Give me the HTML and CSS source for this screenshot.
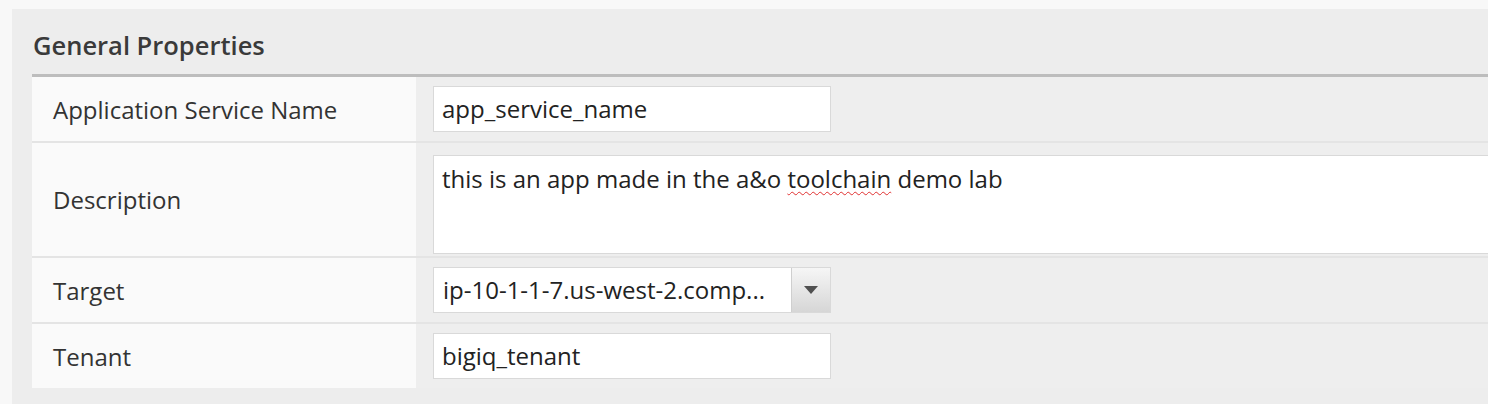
FILE: index.html
```html
<!DOCTYPE html>
<html>
<head>
<meta charset="utf-8">
<link rel="stylesheet" href="styles.css">
</head>
<body>
<div class="panel">
  <h2 class="heading">General Properties</h2>
  <div class="form">
    <div class="row">
      <div class="label">Application Service Name</div>
      <div class="field"><div class="input">app_service_name</div></div>
    </div>
    <div class="row row-tall">
      <div class="label">Description</div>
      <div class="field"><div class="textarea">this is an app made in the a&amp;o <span class="spell">toolchain</span> demo lab</div></div>
    </div>
    <div class="row">
      <div class="label">Target</div>
      <div class="field">
        <div class="select">
          <span class="select-text">ip-10-1-1-7.us-west-2.comp...</span>
          <span class="select-btn"><svg width="14" height="8" viewBox="0 0 14 8"><path d="M0 0H14L7 8Z" fill="#505050"/></svg></span>
        </div>
      </div>
    </div>
    <div class="row">
      <div class="label">Tenant</div>
      <div class="field"><div class="input">bigiq_tenant</div></div>
    </div>
  </div>
</div>
</body>
</html>
```

FILE: styles.css
```css
html, body {
  margin: 0;
  padding: 0;
}
body {
  background: #f8f8f8;
  font-family: "Open Sans", "Noto Sans", sans-serif;
  color: #333;
  width: 1488px;
  height: 404px;
  overflow: hidden;
}
.panel {
  margin: 9px 0 0 12px;
  background: #ededed;
  padding: 0 0 17px 20px;
  height: 395px;
  box-sizing: border-box;
}
.heading {
  margin: 0;
  font-size: 25.5px;
  font-weight: 600;
  color: #3a3a3a;
  padding: 19px 0 0 1px;
  height: 46px;
  line-height: 34px;
  box-sizing: border-box;
  height: 68px;
  border-bottom: 3px solid #bdbdbd;
}
.form {
  display: flex;
  flex-direction: column;
  gap: 2px;
  background: #e4e4e4;
}
.row {
  display: flex;
  height: 64px;
}
.row-tall {
  height: 113px;
}
.label {
  width: 384px;
  flex: none;
  background: #fafafa;
  display: flex;
  align-items: center;
  padding-left: 21px;
  box-sizing: border-box;
  font-size: 24px;
  color: #333;
}
.field {
  flex: 1;
  background: #eeeeee;
  display: flex;
  align-items: center;
  padding-left: 17px;
}
.input {
  width: 398px;
  height: 46px;
  box-sizing: border-box;
  border: 1px solid #d9d9d9;
  background: #fff;
  font-size: 24px;
  line-height: 44px;
  padding-left: 8px;
  color: #222;
}
.row-tall .field {
  align-items: flex-start;
  padding-top: 12px;
}
.textarea {
  flex: 1;
  height: 99px;
  box-sizing: border-box;
  border: 1px solid #d9d9d9;
  border-right: none;
  background: #fff;
  font-size: 24px;
  line-height: 30px;
  padding: 8px 0 0 8px;
  color: #222;
}
.spell {
  text-decoration: underline wavy #e03030;
  text-decoration-thickness: 1px;
  text-underline-offset: 3px;
}
.select {
  width: 398px;
  height: 46px;
  box-sizing: border-box;
  border: 1px solid #d9d9d9;
  background: #fff;
  display: flex;
  font-size: 24px;
  color: #222;
}
.select-text {
  flex: 1;
  padding-left: 9px;
  line-height: 44px;
  white-space: nowrap;
  overflow: hidden;
}
.select-btn {
  width: 38px;
  flex: none;
  background: linear-gradient(#f6f6f6, #d6d6d6);
  border-left: 1px solid #cfcfcf;
  display: flex;
  align-items: center;
  justify-content: center;
}
```
